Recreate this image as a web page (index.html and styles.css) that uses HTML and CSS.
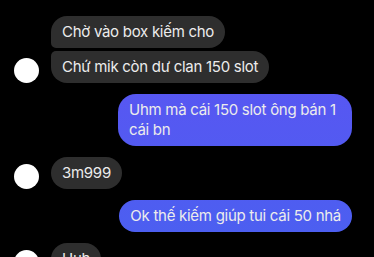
FILE: index.html
```html
<!DOCTYPE html>
<html lang="vi">
<head>
  <meta charset="UTF-8" />
  <meta name="viewport" content="width=device-width, initial-scale=1.0" />
  <title>Chat</title>
  <link rel="stylesheet" href="styles.css">
</head>
<body>
  <div class="chat">
    <div class="group them">
      <div class="avatar"></div>
      <div class="bubbles">
        <div class="bubble first">Chờ vào box kiếm cho</div>
        <div class="bubble last">Chứ mik còn dư clan 150 slot</div>
      </div>
    </div>

    <div class="group me">
      <div class="bubbles">
        <div class="bubble">Uhm mà cái 150 slot ông bán 1 cái bn</div>
      </div>
    </div>

    <div class="group them">
      <div class="avatar"></div>
      <div class="bubbles">
        <div class="bubble">3m999</div>
      </div>
    </div>

    <div class="group me">
      <div class="bubbles">
        <div class="bubble">Ok thế kiếm giúp tui cái 50 nhá</div>
      </div>
    </div>

    <div class="group them">
      <div class="avatar"></div>
      <div class="bubbles">
        <div class="bubble">Uuh</div>
      </div>
    </div>
  </div>
</body>
</html>
```

FILE: styles.css
```css
*{box-sizing:border-box;font-family:Inter,"Noto Sans",sans-serif}
body{margin:0;background:#000;color:#ececec;overflow:hidden;height:257px}
.chat{display:flex;flex-direction:column;gap:11px;padding:16px 22px 0 14px}
.group{display:flex;align-items:flex-end;gap:12px}
.group.me{justify-content:flex-end}
.bubbles{display:flex;flex-direction:column;gap:3px;align-items:flex-start}
.me .bubbles{align-items:flex-end}
.avatar{width:25px;height:25px;border-radius:50%;background:#fff;flex:none}
.bubble{font-size:15px;line-height:20px;letter-spacing:-0.28px;padding:6px 11px;border-radius:16px;background:#2e2e2e;max-width:234px}
.me .bubble{background:linear-gradient(#5e52f3,#4a60f0) fixed;border-radius:18px}
.bubble.first{border-bottom-left-radius:5px}
.bubble.last{border-top-left-radius:5px}
```
